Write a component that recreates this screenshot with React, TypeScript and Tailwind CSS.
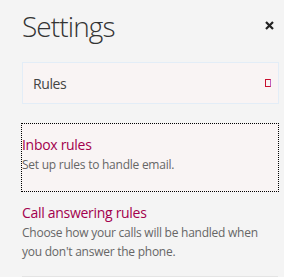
import React from "react";

export default function App() {
  return (
    <div
      className="w-[284px] h-[277px] bg-[#f4f4f4] overflow-hidden relative"
      style={{ fontFamily: "'Open Sans', 'Noto Sans', sans-serif" }}
    >
      <div className="flex items-start justify-between pl-[22px] pr-[8px] pt-[6px]">
        <div className="text-[28px] font-light leading-[40px] text-[#333] tracking-[-0.9px]">Settings</div>
        <button className="mt-[12px] w-[14px] h-[14px] flex items-center justify-center">
          <svg width="9" height="9" viewBox="0 0 9 9">
            <path d="M1 1 L8 8 M8 1 L1 8" stroke="#222" strokeWidth="2.2" />
          </svg>
        </button>
      </div>

      <div className="ml-[22px] mr-[5px] mt-[16px] h-[42px] border border-[#e3edf7] bg-[#f9f4f4] flex items-center justify-between pl-[10px] pr-[7px]">
        <span className="text-[14px] text-[#444] tracking-[-0.4px]">Rules</span>
        <span className="w-[6px] h-[8px] border border-[#c8102e] border-r-[#c060c0]" />
      </div>

      <div className="ml-[21px] mr-[5px] mt-[19px] h-[69px] border border-dotted border-black bg-[#f9f4f4] pt-[11px]">
        <div className="text-[14px] leading-[20px] text-[#a3004d] tracking-[-0.3px]">Inbox rules</div>
        <div className="text-[12px] leading-[18px] text-[#666] mt-[1px] tracking-[-0.25px]">Set up rules to handle email.</div>
      </div>

      <div className="ml-[22px] mr-[6px] mt-[11px]">
        <div className="text-[14px] leading-[20px] text-[#a3004d] tracking-[-0.3px]">Call answering rules</div>
        <div className="text-[12px] leading-[19px] text-[#666] tracking-[-0.25px]">
          Choose how your calls will be handled when you don't answer the phone.
        </div>
        <div className="mt-[15px] h-px bg-[#e4e4e4]" />
      </div>
    </div>
  );
}
